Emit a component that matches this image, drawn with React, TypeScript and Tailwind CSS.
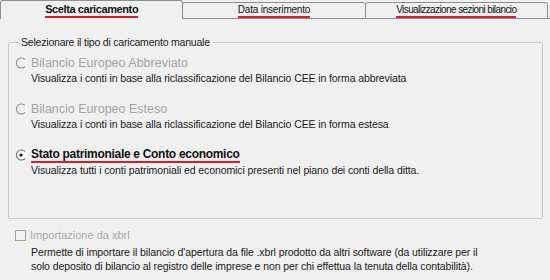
import { ReactNode } from 'react';

const font = { fontFamily: '"Liberation Sans", Arial, sans-serif' };

// Classic Windows-style radio glyph
const Radio = ({ checked = false, disabled = false }: { checked?: boolean; disabled?: boolean }) => (
  <svg width="12" height="12" viewBox="0 0 12 12" className="shrink-0">
    <path d="M10 2.5 A5 5 0 1 0 10 9.5" fill="none" stroke={disabled ? '#8a8a8a' : '#6b6b6b'} strokeWidth="1.2" />
    <path d="M10 2.5 A5 5 0 0 1 10 9.5" fill="none" stroke="#ffffff" strokeWidth="1.2" />
    <circle cx="6" cy="6" r="4.2" fill={disabled ? '#f0f0f0' : '#ffffff'} />
    {checked && <circle cx="6" cy="6" r="1.6" fill="#111111" />}
  </svg>
);

const Option = ({
  label,
  desc,
  checked,
  disabled,
}: {
  label: ReactNode;
  desc: string;
  checked?: boolean;
  disabled?: boolean;
}) => (
  <div className="flex flex-col">
    <div className="flex items-center gap-[4px] h-[16px]">
      <Radio checked={checked} disabled={disabled} />
      {label}
    </div>
    <p className="pl-[16px] text-[10.5px] tracking-[-0.1px] leading-[14px] text-[#1a1a1a]">{desc}</p>
  </div>
);

const Tab = ({ label, active = false, track }: { label: string; active?: boolean; track: string }) => (
  <div
    className={`flex-1 flex items-center justify-center rounded-t-[3px] border border-[#8c9095] ${
      active ? 'border-b-0 h-[19px] bg-[#f0f0f0]' : 'h-[17px] mt-[2px] bg-[#f0f0f0] -ml-px'
    }`}
  >
    <span
      className={`leading-[13px] text-[#111] border-b-2 border-[#d4202a] ${track} ${active ? 'font-bold' : ''}`}
    >
      {label}
    </span>
  </div>
);

export default function App() {
  return (
    <div className="w-[550px] h-[280px] bg-[#f0f0f0] overflow-hidden" style={font}>
      {/* Tab strip */}
      <div className="flex items-start h-[19px] pr-[2px] border-b border-[#8c9095] relative">
        <Tab label="Scelta caricamento" active track="text-[11px] tracking-[-0.4px]" />
        <Tab label="Data inserimento" track="text-[10px] tracking-[-0.2px]" />
        <Tab label="Visualizzazione sezioni bilancio" track="text-[10px] tracking-[-0.6px]" />
      </div>

      {/* Group box */}
      <fieldset className="ml-[8px] mr-[7px] mt-[17px] h-[183px] border border-[#c9c9c9] rounded-[2px] px-[6px]">
        <legend className="ml-[4px] px-[2px] text-[10.5px] tracking-[-0.2px] leading-[13px] text-[#1a1a1a]">
          Selezionare il tipo di caricamento manuale
        </legend>
        <div className="flex flex-col gap-[16px] pt-[6px]">
          <Option
            disabled
            label={<span className="text-[12.5px] text-[#a3a3a3]">Bilancio Europeo Abbreviato</span>}
            desc="Visualizza i conti in base alla riclassificazione del Bilancio CEE in forma abbreviata"
          />
          <Option
            disabled
            label={<span className="text-[12.5px] text-[#a3a3a3]">Bilancio Europeo Esteso</span>}
            desc="Visualizza i conti in base alla riclassificazione del Bilancio CEE in forma estesa"
          />
          <Option
            checked
            label={
              <span className="text-[12px] tracking-[-0.3px] leading-[14px] font-bold text-[#111] border-b-2 border-[#d4202a]">
                Stato patrimoniale e Conto economico
              </span>
            }
            desc="Visualizza tutti i conti patrimoniali ed economici presenti nel piano dei conti della ditta."
          />
        </div>
      </fieldset>

      {/* Xbrl import */}
      <div className="pl-[15px] pt-[9px]">
        <div className="flex items-center gap-[4px] h-[14px]">
          <span className="w-[11px] h-[11px] border border-[#a0a0a0] bg-[#f4f4f4]" />
          <span className="text-[11px] text-[#a8a8a8]">Importazione da xbrl</span>
        </div>
        <p className="pl-[16px] pt-[3px] text-[10.5px] tracking-[-0.1px] leading-[14px] text-[#1a1a1a]">
          Permette di importare il bilancio d'apertura da file .xbrl prodotto da altri software (da utilizzare per il
          <br />
          solo deposito di bilancio al registro delle imprese e non per chi effettua la tenuta della contabilità).
        </p>
      </div>
    </div>
  );
}
